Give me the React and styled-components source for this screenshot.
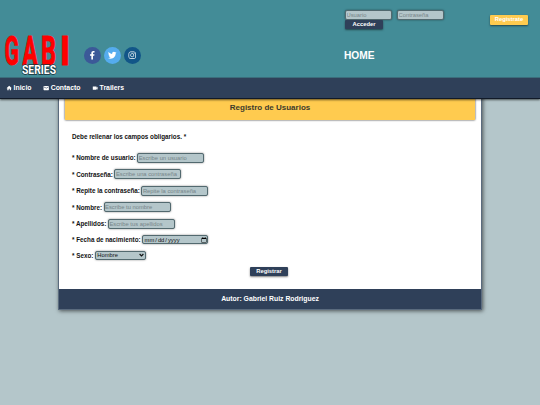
import React from 'react'
import styled, { createGlobalStyle } from 'styled-components'
import { FaFacebookF, FaTwitter, FaInstagram } from 'react-icons/fa'
import { MdHome, MdEmail, MdVideocam } from 'react-icons/md'

const GlobalStyle = createGlobalStyle`
  * {
    box-sizing: border-box;
  }
  body {
    margin: 0;
    min-height: 100vh;
    overflow: hidden;
    background-color: #b4c6ca;
    font-family: 'Liberation Sans', Arial, sans-serif;
    font-weight: bold;
    color: #111;
  }
`

const Header = styled.header`
  position: relative;
  z-index: 1;
  box-shadow: 0 1px 2px rgba(0, 0, 0, 0.6);
`

const Top = styled.div`
  height: 78px;
  display: flex;
  background-color: #438c97;
  border-bottom: 1px solid #3b6d7b;
`

const Logo = styled.svg`
  width: 74px;
  height: 78px;
  flex: none;
`

const Social = styled.div`
  display: flex;
  gap: 3px;
  margin: 47px 0 0 10px;
`

const SocialLink = styled.a`
  width: 17px;
  height: 17px;
  display: flex;
  align-items: center;
  justify-content: center;
  border-radius: 50%;
  color: white;
  font-size: 8.5px;
  background-color: ${props => props.$color};
`

const Access = styled.div`
  width: 101px;
  margin: 10px 0 0 203px;
`

const Login = styled.form`
  display: flex;
  flex-wrap: wrap;
  column-gap: 5px;
  padding-left: 1px;
`

const Input = styled.input`
  width: ${props => props.$width || 67}px;
  height: ${props => props.$height || 10}px;
  padding: 0 0.5px;
  border: 1px solid #52696f;
  border-radius: 2px;
  outline: none;
  background-color: #b4c6ca;
  box-shadow: 0 0 2px rgba(0, 0, 0, 0.5);
  color: #111;
  font-family: inherit;
  font-size: 5.8px;
  &::placeholder {
    color: #768589;
  }
  &::-webkit-datetime-edit,
  &::-webkit-datetime-edit-fields-wrapper {
    padding: 0;
  }
  &::-webkit-calendar-picker-indicator {
    width: 6px;
    height: 6px;
    margin: 0;
    padding: 0;
  }
`

const SelectBox = styled.span`
  width: 51px;
  height: 9px;
  display: grid;
  align-items: center;
  border: 1px solid #52696f;
  border-radius: 2px;
  background-color: #b4c6ca;
  box-shadow: 0 0 2px rgba(0, 0, 0, 0.5);
  > * {
    grid-area: 1 / 1;
  }
  svg {
    width: 5px;
    height: 4px;
    margin-right: 1px;
    justify-self: end;
    pointer-events: none;
  }
`

const Select = styled.select`
  width: 100%;
  height: 7px;
  padding: 0 1.5px;
  appearance: none;
  border: none;
  background: none;
  color: #111;
  font-family: inherit;
  font-size: 5.8px;
  line-height: 7px;
`

const Button = styled.button`
  width: 38px;
  height: 9px;
  padding: 0;
  border: none;
  border-radius: 1px;
  background-color: ${props => (props.$accent ? '#ffcb4f' : '#2f4059')};
  box-shadow: 0 1px 2px rgba(0, 0, 0, 0.5);
  color: white;
  font-family: inherit;
  font-size: 5.8px;
  font-weight: bold;
  line-height: 9px;
`

const Home = styled.h1`
  margin: 21px 0 0;
  color: white;
  font-size: 10.2px;
  line-height: 11px;
`

const SignUp = styled.div`
  margin: 7px 0 0 45px;
  ${Button} {
    height: 10px;
  }
`

const Nav = styled.nav`
  height: 21px;
  padding: 0 6px;
  display: flex;
  align-items: center;
  gap: 11.5px;
  background-color: #2f4059;
  border-bottom: 1px solid #111a28;
`

const NavLink = styled.a`
  display: flex;
  align-items: center;
  gap: 1.2px;
  color: white;
  font-size: 6.9px;
  line-height: 8px;
  svg {
    font-size: 6.4px;
  }
`

const Main = styled.main`
  width: 424px;
  margin: -8px 0 0 58px;
  background-color: white;
  border: 1px solid #5a6b7e;
  box-shadow: 1px 1px 4px rgba(0, 0, 0, 0.6);
`

const Title = styled.h2`
  height: 28px;
  margin: 0 6px;
  padding-top: 11px;
  background-color: #ffcb4f;
  box-shadow: 0 0 2px rgba(0, 0, 0, 0.8);
  color: #3d3b2c;
  font-size: 8px;
  line-height: 10px;
  text-align: center;
`

const Form = styled.form`
  height: 169px;
  padding: 12.5px 13px 0;
  font-size: 6.3px;
`

const Notice = styled.p`
  margin: 0 0 9px;
  line-height: 8px;
`

const Field = styled.label`
  height: ${props => props.$height || 16.5}px;
  display: flex;
  align-items: center;
  gap: 1.5px;
`

const Submit = styled.div`
  display: flex;
  justify-content: center;
  margin: 3.5px 2px 0 0;
`

const Footer = styled.footer`
  height: 20px;
  background-color: #2f4059;
  color: white;
  font-size: 6.85px;
  line-height: 20px;
  text-align: center;
`

const fields = [
  ['Nombre de usuario', 'Escribe un usuario'],
  ['Contraseña', 'Escribe una contraseña'],
  ['Repite la contraseña', 'Repite la contraseña'],
  ['Nombre', 'Escribe tu nombre'],
  ['Apellidos', 'Escribe tus apellidos']
]

// condensed letters, each one squeezed to its own width
const letters = [
  ['G', 4.6, 14.4],
  ['A', 22.4, 15],
  ['B', 41, 15],
  ['I', 60, 10]
]

const GabiLogo = () => (
  <Logo viewBox="0 0 74 78" fontFamily="Roboto, sans-serif" fontWeight="bold">
    <text y="64.5" fontSize="40" fill="#f00" stroke="#f00" strokeWidth="1">
      {letters.map(([letter, x, width]) => (
        <tspan key={letter} x={x} textLength={width} lengthAdjust="spacingAndGlyphs">{letter}</tspan>
      ))}
    </text>
    <text x="22" y="74" fontSize="12" fill="white" stroke="#173038" strokeWidth="1.4" paintOrder="stroke" textLength="34" lengthAdjust="spacingAndGlyphs">SERIES</text>
  </Logo>
)

const App = () => (
  <>
    <GlobalStyle />
    <Header>
      <Top>
        <GabiLogo />
        <Social>
          <SocialLink $color="#3b5998"><FaFacebookF /></SocialLink>
          <SocialLink $color="#55acee"><FaTwitter /></SocialLink>
          <SocialLink $color="#125688"><FaInstagram /></SocialLink>
        </Social>
        <Access>
          <Login>
            <Input $width={47} placeholder="Usuario" />
            <Input $width={47} placeholder="Contraseña" />
            <Button type="button">Acceder</Button>
          </Login>
          <Home>HOME</Home>
        </Access>
        <SignUp>
          <Button $accent>Registrate</Button>
        </SignUp>
      </Top>
      <Nav>
        <NavLink><MdHome />Inicio</NavLink>
        <NavLink><MdEmail />Contacto</NavLink>
        <NavLink><MdVideocam />Trailers</NavLink>
      </Nav>
    </Header>
    <Main>
      <Title>Registro de Usuarios</Title>
      <Form>
        <Notice>Debe rellenar los campos obligarios. *</Notice>
        {fields.map(([label, placeholder]) => (
          <Field key={label}>
            * {label}:
            <Input placeholder={placeholder} />
          </Field>
        ))}
        <Field $height={15.5}>
          * Fecha de nacimiento:
          <Input type="date" $height={9} $width={66} />
        </Field>
        <Field $height={15.5}>
          * Sexo:
          <SelectBox>
            <Select defaultValue="Hombre">
              <option>Hombre</option>
              <option>Mujer</option>
            </Select>
            <svg viewBox="0 0 5 4" fill="none" stroke="#111" strokeWidth="1.2">
              <path d="M0.6 1 L2.5 2.9 L4.4 1" />
            </svg>
          </SelectBox>
        </Field>
        <Submit>
          <Button type="button">Registrar</Button>
        </Submit>
      </Form>
      <Footer>Autor: Gabriel Ruiz Rodriguez</Footer>
    </Main>
  </>
)

export default App
